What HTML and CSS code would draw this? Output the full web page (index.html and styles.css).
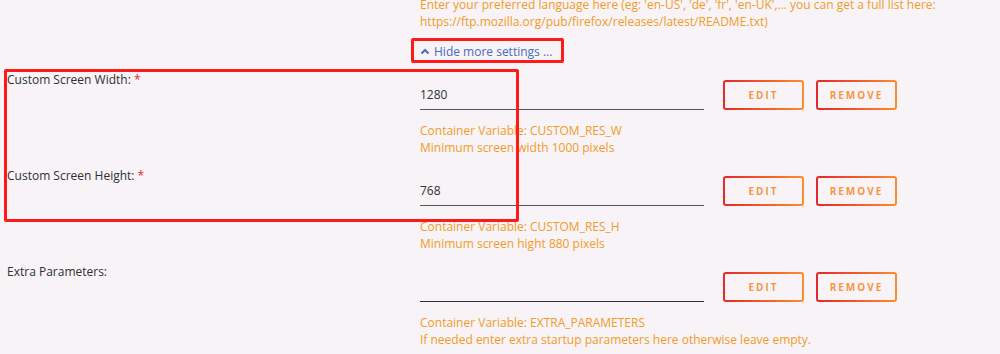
FILE: index.html
```html
<!DOCTYPE html>
<html lang="en">
<head>
    <meta charset="UTF-8">
    <title>Template Settings</title>
    <link rel="stylesheet" href="styles.css">
</head>
<body>
    <div class="settings">
        <div class="row row-first">
            <div class="label"></div>
            <div class="field">
                <div class="help">
                    <div>Enter your preferred language here (eg: 'en-US', 'de', 'fr', 'en-UK',... you can get a full list here:</div>
                    <div>https://ftp.mozilla.org/pub/firefox/releases/latest/README.txt)</div>
                </div>
                <a class="toggle-link" href="#">
                    <svg width="10" height="8" viewBox="0 0 10 8"><polyline points="1.5,6.5 5,3 8.5,6.5" fill="none" stroke="#486dba" stroke-width="2"/></svg>
                    Hide more settings ...
                </a>
            </div>
        </div>

        <div class="row">
            <div class="label">Custom Screen Width: <span class="req">*</span></div>
            <div class="field">
                <div class="input-line">
                    <div class="input">1280</div>
                    <button class="btn">Edit</button>
                    <button class="btn">Remove</button>
                </div>
                <div class="help">
                    <div>Container Variable: CUSTOM_RES_W</div>
                    <div>Minimum screen width 1000 pixels</div>
                </div>
            </div>
        </div>

        <div class="row">
            <div class="label">Custom Screen Height: <span class="req">*</span></div>
            <div class="field">
                <div class="input-line">
                    <div class="input">768</div>
                    <button class="btn">Edit</button>
                    <button class="btn">Remove</button>
                </div>
                <div class="help">
                    <div>Container Variable: CUSTOM_RES_H</div>
                    <div>Minimum screen hight 880 pixels</div>
                </div>
            </div>
        </div>

        <div class="row">
            <div class="label">Extra Parameters:</div>
            <div class="field">
                <div class="input-line">
                    <div class="input dark"></div>
                    <button class="btn">Edit</button>
                    <button class="btn">Remove</button>
                </div>
                <div class="help">
                    <div>Container Variable: EXTRA_PARAMETERS</div>
                    <div>If needed enter extra startup parameters here otherwise leave empty.</div>
                </div>
            </div>
        </div>

        <div class="mark mark-link"></div>
        <div class="mark mark-rows"></div>
    </div>
</body>
</html>
```

FILE: styles.css
```css
html, body {
    margin: 0;
    background: #f7f3f7;
}

body {
    font-family: "Open Sans", "Liberation Sans", sans-serif;
    font-size: 12px;
    color: #303030;
    overflow: hidden;
}

.settings {
    position: relative;
    margin-top: -4px;
}

.row {
    display: grid;
    grid-template-columns: 413px 1fr;
    padding-left: 7px;
    margin-bottom: 12px;
}

.row-first {
    margin-bottom: 13px;
}

.label {
    line-height: 16px;
}

.req {
    color: #e22828;
}

.input-line {
    display: flex;
    align-items: flex-start;
    padding-top: 8px;
}

.input {
    width: 284px;
    height: 29px;
    line-height: 29px;
    border-bottom: 1px solid #555;
    box-sizing: content-box;
}

.input.dark {
    border-bottom-color: #303030;
}

.btn {
    width: 81px;
    height: 30px;
    margin-left: 12px;
    padding: 0;
    border: 2px solid transparent;
    border-radius: 3px;
    background: linear-gradient(#f7f3f7, #f7f3f7) padding-box,
                linear-gradient(90deg, #e22828, #ff8c2f) border-box;
    color: #fb9544;
    font-family: "Open Sans", "Liberation Sans", sans-serif;
    font-size: 10px;
    font-weight: bold;
    letter-spacing: 2px;
    text-transform: uppercase;
    cursor: pointer;
}

.input + .btn {
    margin-left: 19px;
}

.help {
    color: #f29c28;
    line-height: 17px;
    margin-top: 12px;
}

.row-first .help {
    margin-top: 0;
}

.toggle-link {
    display: flex;
    align-items: center;
    gap: 4px;
    margin-top: 13px;
    height: 16px;
    color: #486dba;
    text-decoration: none;
}

.mark {
    position: absolute;
    border: 3px solid #ff1a1a;
    border-radius: 2px;
    box-sizing: border-box;
}

.mark-link {
    left: 411px;
    top: 42px;
    width: 153px;
    height: 25px;
}

.mark-rows {
    left: 4px;
    top: 73px;
    width: 515px;
    height: 153px;
}
```
